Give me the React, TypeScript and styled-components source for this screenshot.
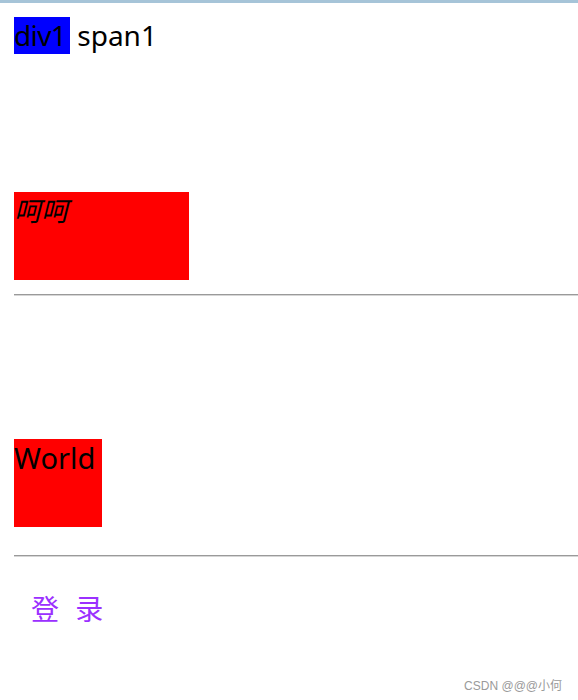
import React from "react";
import styled, { createGlobalStyle } from "styled-components";

const Global = createGlobalStyle`
  html, body { margin: 0; padding: 0; background: #fff; }
  body {
    font-family: "Noto Sans", "Noto Sans CJK SC", sans-serif;
    color: #000;
  }
`;

const Frame = styled.div`
  position: relative;
  min-height: 700px;
  box-sizing: border-box;
  border-top: 3px solid #a6c4d8;
  padding: 0 0 0 14px;
`;

const TextLine = styled.div`
  margin-top: 14px;
  font-size: 28px;
  line-height: 37px;
  height: 37px;
  white-space: nowrap;
`;

const Highlight = styled.span`
  display: inline-block;
  background: #0000ff;
  width: 56px;
  letter-spacing: -0.6px;
`;

const RedBox = styled.div<{ $w: number; $top: number; $italic?: boolean; $size: number; $cjk?: boolean }>`
  width: ${(p) => p.$w}px;
  height: 88px;
  margin-top: ${(p) => p.$top}px;
  background: #ff0000;
  font-family: ${(p) => (p.$cjk ? '"Noto Sans CJK SC", sans-serif' : 'inherit')};
  font-size: ${(p) => p.$size}px;
  line-height: ${(p) => Math.round(p.$size * 1.3)}px;
  font-style: ${(p) => (p.$italic ? "italic" : "normal")};
  white-space: nowrap;
`;

const Rule = styled.hr<{ $top: number }>`
  margin: ${(p) => p.$top}px 0 0 0;
  height: 0;
  border: none;
  border-top: 1px solid #9a9a9a;
  border-bottom: 1px solid #d6d6d6;
`;

const LoginLink = styled.div`
  margin-top: 35px;
  padding-left: 17px;
  font-family: "Noto Sans CJK SC", sans-serif;
  font-size: 28px;
  line-height: 32px;
  color: #9b30ff;
  word-spacing: 10px;
`;

const Watermark = styled.div`
  position: absolute;
  right: 16px;
  bottom: 7px;
  font-family: "Liberation Sans", "Noto Sans CJK SC", sans-serif;
  font-size: 12px;
  color: #9a9a9a;
`;

export default function App() {
  return (
    <>
      <Global />
      <Frame>
        <TextLine>
          <Highlight>div1</Highlight> span1
        </TextLine>
        <RedBox $w={175} $top={138} $italic $size={27} $cjk>
          呵呵
        </RedBox>
        <Rule $top={14} />
        <RedBox $w={88} $top={143} $size={29}>
          World
        </RedBox>
        <Rule $top={28} />
        <LoginLink>登 录</LoginLink>
        <Watermark>CSDN @@@小何</Watermark>
      </Frame>
    </>
  );
}
